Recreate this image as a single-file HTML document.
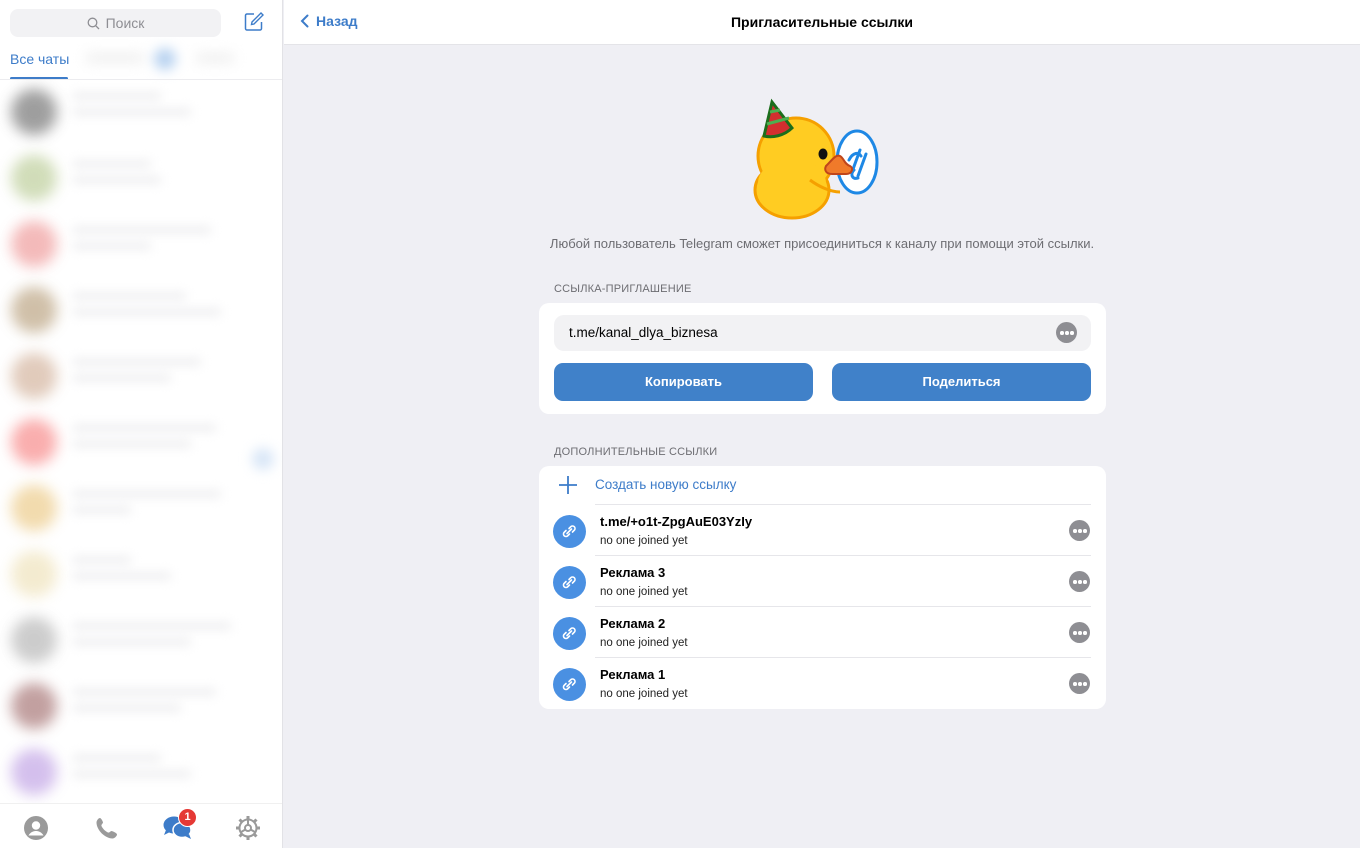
<!DOCTYPE html>
<html><head><meta charset="utf-8">
<style>
*{box-sizing:border-box;margin:0;padding:0}
body{width:1360px;height:848px;overflow:hidden;font-family:"Liberation Sans","DejaVu Sans",sans-serif;background:#efeff4;position:relative}
.side{position:absolute;left:0;top:0;width:283px;height:848px;background:#fff;border-right:1px solid #e2e2e6;overflow:hidden}
.search{position:absolute;left:10px;top:9px;width:211px;height:28px;background:#f2f2f4;border-radius:8px;color:#8e8e93;font-size:14px;line-height:28px;text-align:center}
.tab{position:absolute;left:10px;top:51px;color:#3d7cc9;font-size:14px}
.tabline{position:absolute;left:10px;top:77px;width:58px;height:3px;background:#3d7cc9;border-radius:2px}
.sep{position:absolute;left:0;top:79px;width:283px;height:1px;background:#ececef}
.blur{position:absolute;filter:blur(6px)}
.av{position:absolute;left:11px;width:46px;height:46px;border-radius:50%;filter:blur(7px);opacity:.85}
.bar{position:absolute;left:72px;height:8px;background:#efeff1;border-radius:4px;filter:blur(5px)}
.bottom{position:absolute;left:0;top:803px;width:283px;height:45px;background:#fff;border-top:1px solid #f0f0f0}
.header{position:absolute;left:284px;top:0;width:1076px;height:45px;background:#fff;border-bottom:1px solid #e4e4e8}
.back{position:absolute;left:16px;top:13px;color:#3d7cc9;font-size:14px;font-weight:bold}
.title{position:absolute;left:0;right:0;top:14px;text-align:center;font-size:14px;font-weight:bold;color:#000}
.desc{position:absolute;left:500px;width:644px;top:236px;text-align:center;font-size:13px;color:#6d6d72}
.lbl{position:absolute;left:554px;font-size:11px;color:#6d6d72;letter-spacing:.2px}
.card{position:absolute;left:539px;width:567px;background:#fff;border-radius:10px}
.field{position:absolute;left:15px;top:12px;width:537px;height:36px;background:#f2f2f4;border-radius:10px;font-size:13.5px;line-height:36px;padding-left:15px;color:#000}
.dots{position:absolute;width:21px;height:21px;border-radius:50%;background:#8e8e93}
.dots i{position:absolute;top:9px;width:3.5px;height:3.5px;border-radius:50%;background:#fff}
.btn{position:absolute;top:60px;width:259px;height:38px;background:#4081c9;border-radius:9px;color:#fff;font-size:13px;font-weight:bold;text-align:center;line-height:38px}
.row{position:absolute;left:0;width:567px;height:51px}
.ic{position:absolute;left:14px;top:10px;width:33px;height:33px;border-radius:50%;background:#4a90e2}
.nm{position:absolute;left:61px;top:9px;font-size:13px;font-weight:bold;color:#000}
.sub{position:absolute;left:61px;top:30px;font-size:11.5px;color:#222}
.ln{position:absolute;left:56px;right:15px;height:1px;background:#e6e6ea}
</style></head><body>
<div class="side">
  <div class="search"><svg width="13" height="13" viewBox="0 0 13 13" style="vertical-align:-2px;margin-right:6px"><circle cx="5.5" cy="5.5" r="4.3" fill="none" stroke="#8e8e93" stroke-width="1.3"/><path d="M8.7 8.7L12 12" stroke="#8e8e93" stroke-width="1.3"/></svg>Поиск</div>
  <svg style="position:absolute;left:244px;top:12px" width="20" height="20" viewBox="0 0 20 20"><path d="M10 2H3a1.5 1.5 0 0 0-1.5 1.5v13A1.5 1.5 0 0 0 3 18h13a1.5 1.5 0 0 0 1.5-1.5V10" fill="none" stroke="#3d7cc9" stroke-width="1.5"/><path d="M7.5 12.5L8 10 17 1l2 2-9 9z" fill="none" stroke="#3d7cc9" stroke-width="1.4"/></svg>
  <div class="tab">Все чаты</div>
  <div class="blur" style="left:85px;top:52px;width:60px;height:12px;background:#f2f2f2;border-radius:6px"></div>
  <div class="blur" style="left:154px;top:48px;width:22px;height:22px;background:#b8d2f0;border-radius:50%"></div>
  <div class="blur" style="left:195px;top:52px;width:40px;height:12px;background:#f2f2f2;border-radius:6px"></div>
  <div class="tabline"></div><div class="sep"></div>
  <div class="av" style="top:89px;background:#8e8e8e"></div>
  <div class="av" style="top:155px;background:#c9d7ad"></div>
  <div class="av" style="top:221px;background:#f2aeae"></div>
  <div class="av" style="top:287px;background:#c8b59a"></div>
  <div class="av" style="top:353px;background:#dcc2b0"></div>
  <div class="av" style="top:419px;background:#f9a0a0"></div>
  <div class="av" style="top:485px;background:#f0d5a0"></div>
  <div class="av" style="top:551px;background:#f2e8c8"></div>
  <div class="av" style="top:617px;background:#c4c4c4"></div>
  <div class="av" style="top:683px;background:#b89090"></div>
  <div class="av" style="top:749px;background:#cdb5ea"></div>
  <div class="bar" style="top:92px;width:90px"></div><div class="bar" style="top:108px;width:120px"></div>
  <div class="bar" style="top:160px;width:80px"></div><div class="bar" style="top:176px;width:90px"></div>
  <div class="bar" style="top:226px;width:140px"></div><div class="bar" style="top:242px;width:80px"></div>
  <div class="bar" style="top:292px;width:115px"></div><div class="bar" style="top:308px;width:150px"></div>
  <div class="bar" style="top:358px;width:130px"></div><div class="bar" style="top:374px;width:100px"></div>
  <div class="bar" style="top:424px;width:145px"></div><div class="bar" style="top:440px;width:120px"></div>
  <div class="bar" style="top:490px;width:150px"></div><div class="bar" style="top:506px;width:60px"></div>
  <div class="bar" style="top:556px;width:60px"></div><div class="bar" style="top:572px;width:100px"></div>
  <div class="bar" style="top:622px;width:160px"></div><div class="bar" style="top:638px;width:120px"></div>
  <div class="bar" style="top:688px;width:145px"></div><div class="bar" style="top:704px;width:110px"></div>
  <div class="bar" style="top:754px;width:90px"></div><div class="bar" style="top:770px;width:120px"></div>
  <div class="blur" style="left:252px;top:448px;width:22px;height:22px;background:#d8e6f7;border-radius:50%"></div>
  <div class="bottom">
    <svg style="position:absolute;left:24px;top:12px" width="24" height="24" viewBox="0 0 24 24"><circle cx="12" cy="12" r="12" fill="#9a9a9a"/><circle cx="12" cy="9.5" r="4.2" fill="#fff"/><path d="M4.5 19.5c2-3.5 5-4.5 7.5-4.5s5.5 1 7.5 4.5" fill="#fff"/></svg>
    <svg style="position:absolute;left:95px;top:12px" width="24" height="24" viewBox="0 0 24 24"><path d="M5 2c1 0 3 3.5 3 4.5S6 8.5 6.5 10c1 2.5 4 5.5 6.5 6.5 1.5.5 2.5-1.5 3.5-1.5S22 17 22 18.5c0 1.5-2.5 4-4.5 4C10 22.5 1.5 14 1.5 6.5 1.5 4.5 3.5 2 5 2z" fill="#9a9a9a"/></svg>
    <svg style="position:absolute;left:163px;top:11px" width="30" height="26" viewBox="0 0 30 26"><ellipse cx="11" cy="10" rx="10.5" ry="8.5" fill="#3d7cc9"/><path d="M3 15l-2 5 6-3z" fill="#3d7cc9"/><ellipse cx="19" cy="15" rx="9" ry="7.5" fill="#3d7cc9" stroke="#fff" stroke-width="1.5"/><path d="M26 19l2 5-6-3z" fill="#3d7cc9"/></svg>
    <div style="position:absolute;left:178px;top:4px;width:19px;height:19px;border-radius:50%;background:#e53935;color:#fff;font-size:11px;font-weight:bold;text-align:center;line-height:16px;border:1.5px solid #fff">1</div>
    <svg style="position:absolute;left:235px;top:11px" width="26" height="26" viewBox="0 0 26 26"><g fill="none" stroke="#9a9a9a" stroke-width="2"><circle cx="13" cy="13" r="8.5"/><circle cx="13" cy="13" r="3"/><path d="M13 10V4.5M10.4 14.5l-4.7 2.7M15.6 14.5l4.7 2.7"/></g><g stroke="#9a9a9a" stroke-width="3"><path d="M13 1v3M13 22v3M1 13h3M22 13h3M4.5 4.5l2 2M19.5 19.5l2 2M4.5 21.5l2-2M19.5 6.5l2-2"/></g></svg>
  </div>
</div>
<div class="header">
  <div class="back"><svg width="9" height="14" viewBox="0 0 9 14" style="vertical-align:-2px;margin-right:7px"><path d="M7.5 1.5L2 7l5.5 5.5" fill="none" stroke="#3d7cc9" stroke-width="2" stroke-linecap="round"/></svg>Назад</div>
  <div class="title">Пригласительные ссылки</div>
</div>
<svg style="position:absolute;left:750px;top:98px" width="130" height="128" viewBox="0 0 130 128">
  <ellipse cx="107" cy="64" rx="20" ry="31" fill="#fff" stroke="#1e88e5" stroke-width="3"/>
  <path d="M99 62c4-8 10-8 12-4M104 72c-4 4-2 10 4 8M110 52l-8 22M116 56l-8 22" stroke="#1e88e5" stroke-width="3" fill="none" stroke-linecap="round"/>
  <ellipse cx="42" cy="92" rx="37" ry="28" fill="#ffcc22" stroke="#f5a000" stroke-width="3"/>
  <circle cx="46" cy="58" r="38" fill="#ffcc22" stroke="#f5a000" stroke-width="3"/>
  <ellipse cx="42" cy="85" rx="34" ry="24" fill="#ffcc22"/>
  <path d="M60 82c8 6 20 12 30 12" fill="none" stroke="#f5a000" stroke-width="3"/>
  <ellipse cx="73" cy="56" rx="4.5" ry="5.5" fill="#111"/>
  <path d="M76 68c6-6 10-12 14-10 4 2 4 8 10 10 4 2 2 8-4 8H82c-6 0-8-4-6-8z" fill="#f07a2a" stroke="#c0451a" stroke-width="2"/>
  <path d="M14 38L22 4 42 30c-8 8-20 10-28 8z" fill="#d32f2f" stroke="#1b6e1b" stroke-width="3"/>
  <path d="M17 26l22-6M20 14l10-2" stroke="#4caf50" stroke-width="3"/>
</svg>
<div class="desc">Любой пользователь Telegram сможет присоединиться к каналу при помощи этой ссылки.</div>
<div class="lbl" style="top:283px">ССЫЛКА-ПРИГЛАШЕНИЕ</div>
<div class="card" style="top:303px;height:111px">
  <div class="field">t.me/kanal_dlya_biznesa</div>
  <div class="dots" style="left:517px;top:19px"><i style="left:4px"></i><i style="left:9px"></i><i style="left:14px"></i></div>
  <div class="btn" style="left:15px">Копировать</div>
  <div class="btn" style="left:293px">Поделиться</div>
</div>
<div class="lbl" style="top:446px">ДОПОЛНИТЕЛЬНЫЕ ССЫЛКИ</div>
<div class="card" style="top:466px;height:243px">
  <svg style="position:absolute;left:19px;top:9px" width="20" height="20" viewBox="0 0 20 20"><path d="M10 1v18M1 10h18" stroke="#3d7cc9" stroke-width="1.8"/></svg>
  <div style="position:absolute;left:56px;top:11px;font-size:13.5px;color:#3d7cc9">Создать новую ссылку</div>
  <div class="ln" style="top:38px"></div>
  <div class="row" style="top:39px"><div class="ic"></div><div class="nm">t.me/+o1t-ZpgAuE03YzIy</div><div class="sub">no one joined yet</div><div class="dots" style="left:530px;top:15px"><i style="left:4px"></i><i style="left:9px"></i><i style="left:14px"></i></div></div>
  <div class="ln" style="top:89px"></div>
  <div class="row" style="top:90px"><div class="ic"></div><div class="nm">Реклама 3</div><div class="sub">no one joined yet</div><div class="dots" style="left:530px;top:15px"><i style="left:4px"></i><i style="left:9px"></i><i style="left:14px"></i></div></div>
  <div class="ln" style="top:140px"></div>
  <div class="row" style="top:141px"><div class="ic"></div><div class="nm">Реклама 2</div><div class="sub">no one joined yet</div><div class="dots" style="left:530px;top:15px"><i style="left:4px"></i><i style="left:9px"></i><i style="left:14px"></i></div></div>
  <div class="ln" style="top:191px"></div>
  <div class="row" style="top:192px"><div class="ic"></div><div class="nm">Реклама 1</div><div class="sub">no one joined yet</div><div class="dots" style="left:530px;top:15px"><i style="left:4px"></i><i style="left:9px"></i><i style="left:14px"></i></div></div>
</div>
<svg width="0" height="0" style="position:absolute"><defs><g id="lk"><path d="M8 12.5l4.5-4.5M7 9.5l-2 2a2.5 2.5 0 0 0 3.5 3.5l2-2M13.5 11l2-2A2.5 2.5 0 0 0 12 5.5l-2 2" fill="none" stroke="#fff" stroke-width="1.6" stroke-linecap="round"/></g></defs></svg>
<svg style="position:absolute;left:559px;top:521px" width="21" height="21" viewBox="0 0 21 21"><use href="#lk"/></svg>
<svg style="position:absolute;left:559px;top:572px" width="21" height="21" viewBox="0 0 21 21"><use href="#lk"/></svg>
<svg style="position:absolute;left:559px;top:623px" width="21" height="21" viewBox="0 0 21 21"><use href="#lk"/></svg>
<svg style="position:absolute;left:559px;top:674px" width="21" height="21" viewBox="0 0 21 21"><use href="#lk"/></svg>
</body></html>
